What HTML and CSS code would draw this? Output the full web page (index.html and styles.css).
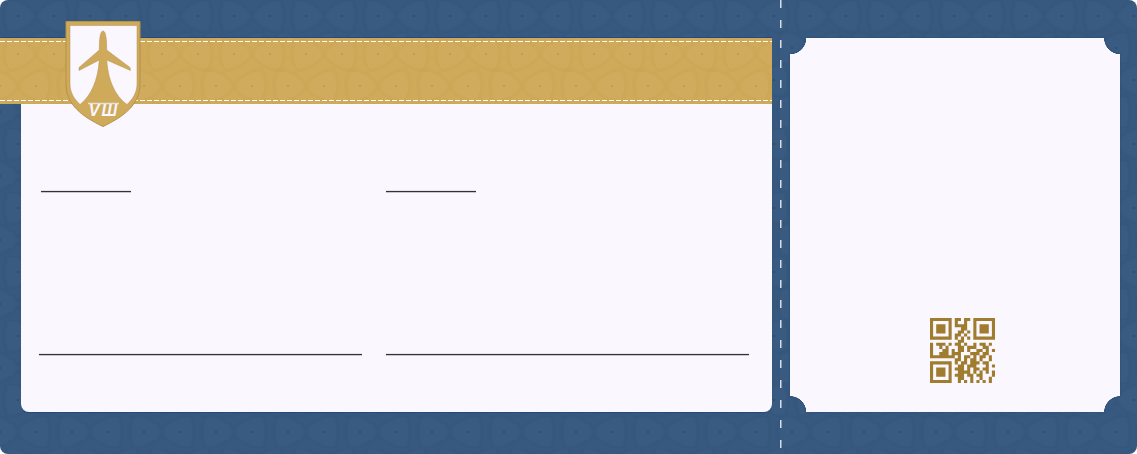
FILE: index.html
```html
<!DOCTYPE html>
<html lang="en">
  <head>
    <meta charset="UTF-8" />
    <meta name="viewport" content="width=device-width, initial-scale=1.0" />
    <title>Boarding Pass</title>
    <link rel="stylesheet" href="styles.css">
  </head>
  <body>
    <div class="ticket">
      <div class="main">
        <!-- crest sits over the gold band -->
        <svg class="crest" width="76" height="108" viewBox="0 0 76 108" aria-hidden="true">
          <path class="crest-gold" d="M1 1.500H75V64C75 85 58 97 38 106.500C18 97 1 85 1 64Z" />
          <path class="crest-white" d="M5 5.500H72V64C72 72 68 79 62 84.500C50 76 43 60 41.700 40L65.500 50.500L65 47.500L41.700 30C41.700 20 41 11 38 11C35 11 34.300 20 34.300 30L14 47.500L14 50.500L34.300 40C33 60 26 76 15 84.500C9 79 5 72 5 64Z" />
          <path class="crest-flare" d="M23 83.500H54" />
          <text class="crest-letters" x="39" y="96">VШ</text>
        </svg>
        <div class="band"><div class="band-stitch"></div></div>
        <div class="panel">
          <div class="rule rule-short rule-first"></div>
          <div class="rule rule-short"></div>
          <div class="rule rule-left"></div>
          <div class="rule"></div>
        </div>
      </div>
      <div class="perforation"></div>
      <div class="stub">
        <svg class="qr" width="65" height="65" viewBox="0 0 21 21" aria-hidden="true">
          <path class="qr-finder" d="M0 0H7V7H0ZM1 1V6H6V1ZM2 2H5V5H2ZM14 0H21V7H14ZM15 1V6H20V1ZM16 2H19V5H16ZM0 14H7V21H0ZM1 15V20H6V15ZM2 16H5V19H2Z" />
          <path class="qr-data" d="M8 .5h2M11 .5h2M8 1.500h1M11 1.500h1M8 2.500h4M10 3.500h2M9 4.500h2M12 4.500h1M8 5.500h2M11 5.500h1M8 6.500h1M10 6.500h1M12 6.500h1M9 7.500h2M0 8.500h1M2 8.500h3M6 8.500h1M8 8.500h2M11 8.500h1M14 8.500h1M16 8.500h2M19 8.500h1M0 9.500h1M3 9.500h1M5 9.500h1M9 9.500h2M12 9.500h3M17 9.500h2M0 10.500h1M4 10.500h2M7 10.500h1M9 10.500h2M12 10.500h1M15 10.500h2M18 10.500h1M20 10.500h1M0 11.500h1M3 11.500h3M7 11.500h3M13 11.500h3M17 11.500h2M0 12.500h8M9 12.500h1M11 12.500h2M14 12.500h1M16 12.500h2M19 12.500h1M8 13.500h2M11 13.500h1M13 13.500h2M16 13.500h1M19 13.500h1M8 14.500h1M10 14.500h2M13 14.500h3M17 14.500h2M9 15.500h2M12 15.500h3M18 15.500h1M20 15.500h1M8 16.500h3M12 16.500h1M14 16.500h2M17 16.500h2M9 17.500h4M14 17.500h1M16 17.500h1M18 17.500h1M20 17.500h1M8 18.500h3M12 18.500h2M15 18.500h2M20 18.500h1M9 19.500h2M13 19.500h1M16 19.500h1M19 19.500h1M9 20.500h1M11 20.500h1M13 20.500h1M15 20.500h1M17 20.500h1M19 20.500h1" />
        </svg>
      </div>
    </div>
  </body>
</html>
```

FILE: styles.css
```css
* {
  margin: 0;
  padding: 0;
  box-sizing: border-box;
}
:root {
  --blue: #37597f;
  --gold: #cfaa5b;
  --paper: #faf7ff;
  --qr: #a07c2f;
  /* same hex tile twice, the dark lines need more weight on the blue */
  --pattern-blue: url("data:image/svg+xml,%3Csvg xmlns='http://www.w3.org/2000/svg' width='72' height='64'%3E%3Cdefs%3E%3Cg id='b'%3E%3Cpath d='M18 0Q8 14-9 15.600Q-17 0-9-15.600Q8-14 18 0Z' fill='%23fff' fill-opacity='.01' stroke='%23123' stroke-opacity='.09'/%3E%3Cpath d='M21 0Q9 16-10.500 18.200Q-20 0-10.500-18.200Q9-16 21 0Z' fill='none' stroke='%23123' stroke-opacity='.07'/%3E%3Ccircle r='1' fill='%23123' fill-opacity='.3'/%3E%3C/g%3E%3C/defs%3E%3Cuse href='%23b' x='18' y='16'/%3E%3Cuse href='%23b' transform='translate(54 16) rotate(180)'/%3E%3Cuse href='%23b' transform='translate(36 48) rotate(180)'/%3E%3Cuse href='%23b' x='0' y='48'/%3E%3Cuse href='%23b' x='72' y='48'/%3E%3C/svg%3E");
  --pattern-gold: url("data:image/svg+xml,%3Csvg xmlns='http://www.w3.org/2000/svg' width='72' height='64'%3E%3Cdefs%3E%3Cg id='b'%3E%3Cpath d='M18 0Q8 14-9 15.600Q-17 0-9-15.600Q8-14 18 0Z' fill='%23fff' fill-opacity='.01' stroke='%23850' stroke-opacity='.08'/%3E%3Cpath d='M21 0Q9 16-10.500 18.200Q-20 0-10.500-18.200Q9-16 21 0Z' fill='none' stroke='%23850' stroke-opacity='.06'/%3E%3Ccircle r='1' fill='%23850' fill-opacity='.25'/%3E%3C/g%3E%3C/defs%3E%3Cuse href='%23b' x='18' y='16'/%3E%3Cuse href='%23b' transform='translate(54 16) rotate(180)'/%3E%3Cuse href='%23b' transform='translate(36 48) rotate(180)'/%3E%3Cuse href='%23b' x='0' y='48'/%3E%3Cuse href='%23b' x='72' y='48'/%3E%3C/svg%3E");
}
body {
  background: #fff;
  overflow: hidden;
}
.ticket {
  display: grid;
  grid-template-columns: 772px 18px 330px 17px;
  height: 454px;
  border-radius: 8px;
  overflow: hidden;
  background: var(--pattern-blue), var(--blue);
}
.main {
  position: relative;
  display: flex;
  flex-direction: column;
  padding: 38px 0 42px;
}
.crest {
  position: absolute;
  top: 20px;
  left: 65px;
  z-index: 1;
}
.crest-gold {
  fill: var(--gold);
  stroke: #b4924a;
  stroke-width: 1;
}
.crest-white {
  fill: var(--paper);
  stroke: #b4924a;
  stroke-width: 0.5;
}
.crest-flare {
  stroke: #e6e1d6;
  stroke-width: 1.5;
}
.crest-letters {
  fill: var(--paper);
  font-family: "Liberation Sans", sans-serif;
  font-size: 16px;
  font-style: italic;
  font-weight: bold;
  letter-spacing: 2px;
  text-anchor: middle;
}
.band {
  height: 66px;
  padding: 3px 0;
  background: var(--pattern-gold), var(--gold);
  box-shadow: 0 -1px 0 #27497a;
}
.band-stitch {
  height: 60px;
  background:
    repeating-linear-gradient(90deg, #fff 0 5px, transparent 5px 7px) 0 0 / 100% 1px no-repeat,
    repeating-linear-gradient(90deg, #fff 0 5px, transparent 5px 7px) 0 100% / 100% 1px no-repeat;
}
.panel {
  flex: 1;
  display: grid;
  grid-template-columns: 347px 363px;
  grid-template-rows: 1px 1px;
  row-gap: 162px;
  margin-left: 21px;
  padding: 87px 0 0 18px;
  background: var(--paper);
  border-radius: 0 0 8px 8px;
  box-shadow: 0 1px 1px #27497a;
}
.rule {
  height: 1px;
  background: #333;
  box-shadow: 0 1px 0 rgba(0, 0, 0, 0.2), 0 -1px 0 rgba(0, 0, 0, 0.08);
}
.rule-short {
  width: 90px;
}
.rule-first {
  margin-left: 2px;
}
.rule-left {
  width: 323px;
}
.perforation {
  background: repeating-linear-gradient(180deg, #d9dee6 0 8px, transparent 8px 20px) 8px 0 / 1.5px 100% no-repeat;
}
.stub {
  display: flex;
  align-items: flex-end;
  margin: 38px 0 42px;
  padding: 0 0 29px 140px;
  background:
    radial-gradient(circle at 0 0, transparent 16px, var(--paper) 16.5px) 0 0 / 50.1% 50.1% no-repeat,
    radial-gradient(circle at 100% 0, transparent 16px, var(--paper) 16.5px) 100% 0 / 50.1% 50.1% no-repeat,
    radial-gradient(circle at 0 100%, transparent 16px, var(--paper) 16.5px) 0 100% / 50.1% 50.1% no-repeat,
    radial-gradient(circle at 100% 100%, transparent 16px, var(--paper) 16.5px) 100% 100% / 50.1% 50.1% no-repeat;
  filter: drop-shadow(0 0 1px #27497a);
}
.qr-finder {
  fill: var(--qr);
  fill-rule: evenodd;
}
.qr-data {
  fill: none;
  stroke: var(--qr);
  stroke-width: 1;
}
```
